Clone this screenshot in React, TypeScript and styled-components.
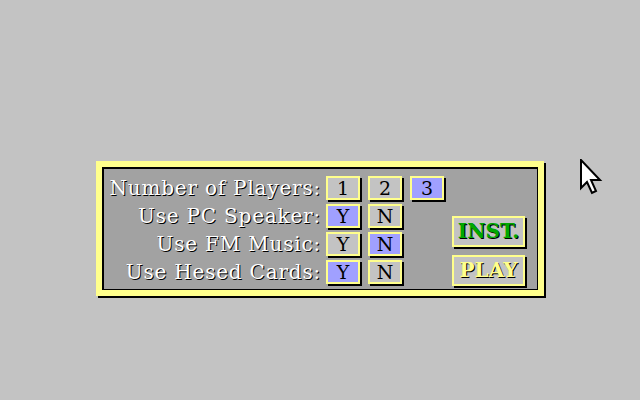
import React from 'react';
import styled, { createGlobalStyle } from 'styled-components';

const GlobalStyle = createGlobalStyle`
  html, body {
    margin: 0;
    padding: 0;
    background: #c3c3c3;
  }
`;

const YELLOW = '#ffff8c';

const Screen = styled.div`
  position: relative;
  width: 640px;
  height: 400px;
  background: #c3c3c3;
  display: flex;
  justify-content: center;
  align-items: flex-start;
  padding-top: 161px;
  box-sizing: border-box;
  font-family: 'DejaVu Serif', 'Liberation Serif', serif;
  overflow: hidden;
`;

const Frame = styled.div`
  width: 448px;
  box-sizing: border-box;
  background: ${YELLOW};
  padding: 6px;
  box-shadow: 2px 2px 0 #000;
`;

const Panel = styled.div`
  background: #a2a2a2;
  border-top: 2px solid #000;
  border-left: 2px solid #000;
  border-right: 1px solid #000;
  border-bottom: 1px solid #000;
  padding: 7px 0 3px 4px;
  display: flex;
  align-items: flex-start;
`;

const Options = styled.div`
  display: grid;
  grid-template-columns: 210px repeat(3, 34px);
  grid-auto-rows: 24px;
  column-gap: 8px;
  row-gap: 4px;
`;

const Label = styled.div`
  margin-right: -3px;
  text-align: right;
  color: #fff;
  font-size: 20px;
  letter-spacing: 0.8px;
  line-height: 24px;
  white-space: nowrap;
  text-shadow: 1px 1px 0 #000;
`;

const OptionButton = styled.div<{ $on?: boolean }>`
  box-sizing: border-box;
  width: 34px;
  height: 24px;
  border: 2px solid ${YELLOW};
  background: ${(p) => (p.$on ? '#a0a0ff' : '#c3c3c3')};
  box-shadow: 2px 2px 0 #000;
  color: #000;
  font-size: 19px;
  line-height: 20px;
  text-align: center;
`;

const Actions = styled.div`
  display: flex;
  flex-direction: column;
  gap: 8px;
  margin-left: 8px;
  padding-top: 40px;
`;

const ActionButton = styled.div<{ $color: string }>`
  box-sizing: border-box;
  width: 73px;
  height: 31px;
  border: 2px solid ${YELLOW};
  background: #c3c3c3;
  box-shadow: 2px 2px 0 #000;
  color: ${(p) => p.$color};
  font-size: 20px;
  font-weight: bold;
  line-height: 27px;
  text-align: center;
  text-shadow: 1px 1px 0 #000;
`;

const Cursor = styled.svg`
  position: absolute;
  left: 580px;
  top: 159px;
`;

const rows: { label: string; options: string[]; selected: number }[] = [
  { label: 'Number of Players:', options: ['1', '2', '3'], selected: 2 },
  { label: 'Use PC Speaker:', options: ['Y', 'N'], selected: 0 },
  { label: 'Use FM Music:', options: ['Y', 'N'], selected: 1 },
  { label: 'Use Hesed Cards:', options: ['Y', 'N'], selected: 0 },
];

export default function App() {
  return (
    <>
      <GlobalStyle />
      <Screen>
        <Frame>
          <Panel>
            <Options>
              {rows.map((row) => (
                <React.Fragment key={row.label}>
                  <Label>{row.label}</Label>
                  {[0, 1, 2].map((i) =>
                    row.options[i] ? (
                      <OptionButton key={i} $on={row.selected === i}>
                        {row.options[i]}
                      </OptionButton>
                    ) : (
                      <span key={i} />
                    )
                  )}
                </React.Fragment>
              ))}
            </Options>
            <Actions>
              <ActionButton $color="#00a800">INST.</ActionButton>
              <ActionButton $color={YELLOW}>PLAY</ActionButton>
            </Actions>
          </Panel>
        </Frame>
        <Cursor width="24" height="36" viewBox="0 0 12 18">
          <path
            d="M0.5 0.5 V14.5 L3.5 11.5 L6 17 L8 16 L5.5 10.5 H10 Z"
            fill="#fff"
            stroke="#000"
            strokeWidth="1"
            strokeLinejoin="miter"
          />
        </Cursor>
      </Screen>
    </>
  );
}
